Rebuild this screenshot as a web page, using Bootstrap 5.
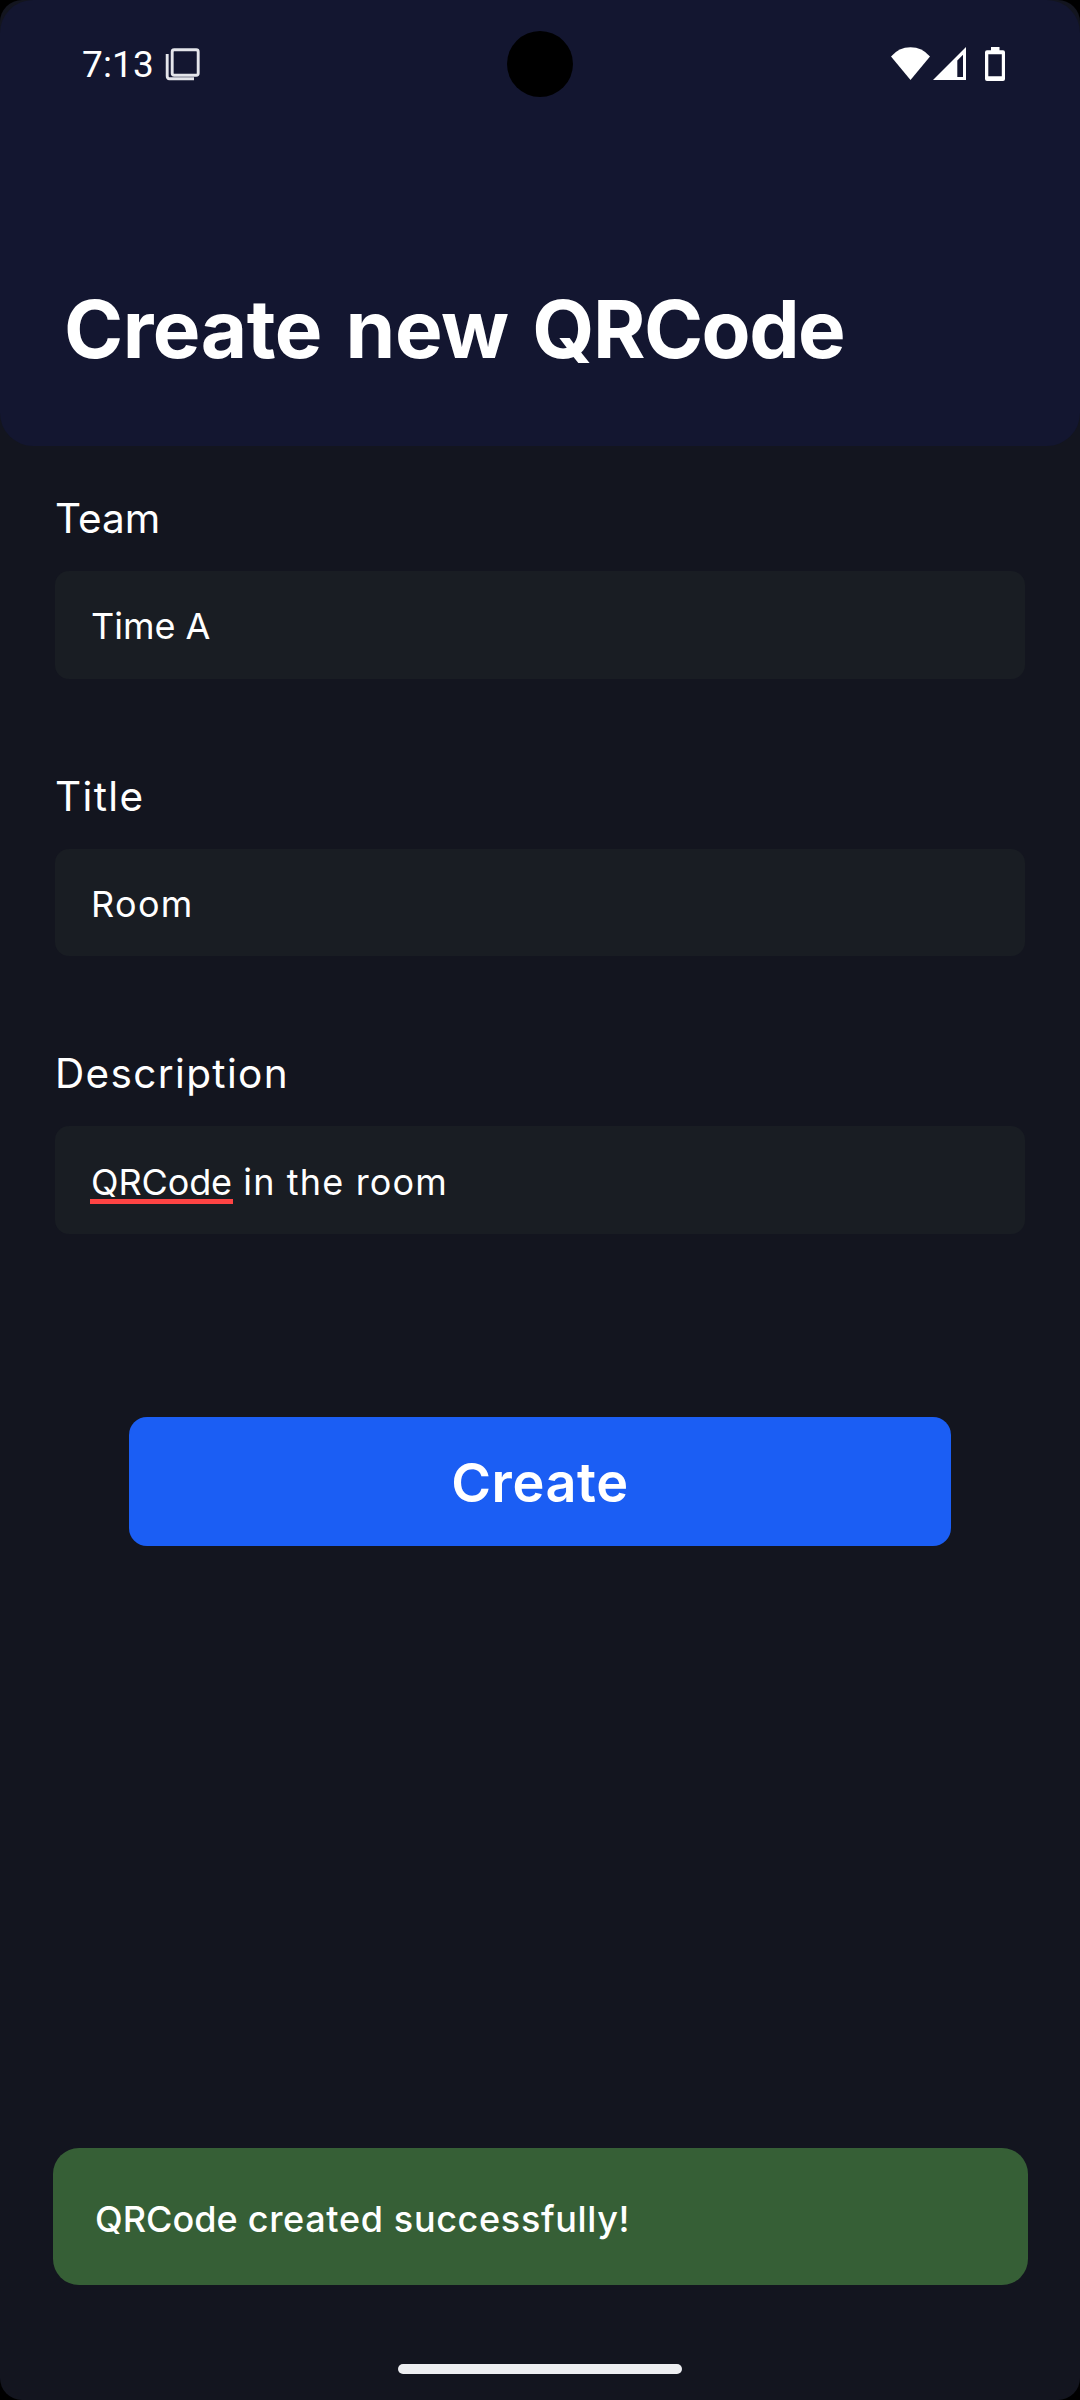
<!DOCTYPE html>
<html lang="en" data-bs-theme="dark">
<head>
<meta charset="utf-8">
<meta name="viewport" content="width=device-width, initial-scale=1">
<title>Create new QRCode</title>
<link href="https://cdn.jsdelivr.net/npm/bootstrap@5.3.0/dist/css/bootstrap.min.css" rel="stylesheet">
<style>
body { background: #000; color: #fff; font-family: Inter, "Noto Sans", sans-serif; }
.screen { height: 2400px; background: #13151f; border-radius: 22px; }
.app-header { height: 446px; background: #131630; border-radius: 33px; }
.status-bar { height: 128px; padding: 0 74px 0 82px; }
.clock { font: 400 37px/1 Roboto, sans-serif; letter-spacing: .15px; margin-right: 11px; }
.camera { width: 66px; height: 66px; background: #000; top: 31px; left: 507px; }
.page-title { font-size: 80px; line-height: 96px; letter-spacing: -.5px; word-spacing: 5.3px; margin: 153px 0 0 64px; }
.ls-tight { letter-spacing: -1.5px; }
.app-form { padding: 45px 55px 0; }
.field { height: 277.7px; }
.field .form-label { font-size: 40.5px; line-height: 56px; margin: 0 0 24px; }
.field .form-control { height: 107.5px; border: 0; border-radius: 14px; background: #191d23; color: #fff; font-size: 36px; line-height: 54px; padding: 28px 36px 0; }
.ls-wide { letter-spacing: 1.35px; }
.field .ls-phrase { letter-spacing: 1.15px; padding-top: 29px; }
.ls-notice { letter-spacing: .65px; }
.misspelled { letter-spacing: -.1px; }
.misspelled::after { content: ""; position: absolute; left: -1px; right: -1px; top: 44px; height: 5px; background: #ff4444; }
.btn-create { height: 129px; margin: 93px 74px 0; border: 0; border-radius: 18px; background: #1b5ef4; color: #fff; font-size: 54px; line-height: 66px; letter-spacing: .6px; font-weight: 600; padding: 2px 0 0; }
.btn-create:hover { background: #1b5ef4; }
.notice { height: 137px; margin: 0 52px 79px 53px; border-radius: 26px; background: #365f36; color: #fff; font-size: 36px; line-height: 54px; font-weight: 550; padding: 5px 42px 0; }
.home-bar { width: 284px; height: 10px; border-radius: 5px; background: #edeef1; margin-bottom: 26px; }
</style>
<script src="https://cdn.jsdelivr.net/npm/bootstrap@5.3.0/dist/js/bootstrap.bundle.min.js"></script>
</head>
<body>
<main class="screen d-flex flex-column overflow-hidden position-relative">
  <header class="app-header">
    <div class="status-bar d-flex align-items-center justify-content-between">
      <div class="d-flex align-items-center">
        <span class="clock">7:13</span>
        <svg width="36" height="36" viewBox="0 0 36 36" fill="none" stroke="#e4e5ea" stroke-width="2.9">
          <rect x="7.2" y="3.7" width="26" height="25.6" rx="2"/>
          <path d="M2.2 8v22q0 2.700 2.200 2.700H29"/>
        </svg>
      </div>
      <svg width="116" height="36" viewBox="0 0 116 36" fill="#fff">
        <path d="M1 10.500Q8.800 1.200 20.500 1.200T40 10.500L20.500 34Z"/>
        <path fill-rule="evenodd" d="M43 34L76 1V34ZM67.300 14.500V31H73V8.800Z"/>
        <path fill-rule="evenodd" d="M101 1h8.500v3.300H113q2 0 2 2V33q0 2-2 2H97q-2 0-2-2V6.300q0-2 2-2h4ZM98.300 8.300V30.300H111.800V8.300Z"/>
      </svg>
    </div>
    <h1 class="page-title fw-bold">Create new <span class="ls-tight">QRCode</span></h1>
  </header>
  <div class="camera position-absolute rounded-circle"></div>

  <form class="app-form d-flex flex-column">
    <div class="field">
      <div class="form-label">Team</div>
      <div class="form-control">Time A</div>
    </div>
    <div class="field">
      <div class="form-label ls-wide">Title</div>
      <div class="form-control ls-wide">Room</div>
    </div>
    <div class="field">
      <div class="form-label ls-wide">Description</div>
      <div class="form-control ls-phrase"><span class="misspelled position-relative d-inline-block">QRCode</span> in the room</div>
    </div>
    <button type="button" class="btn btn-primary btn-create">Create</button>
  </form>

  <div class="notice mt-auto d-flex align-items-center flex-shrink-0" role="alert"><div><span>QRCode</span><span class="ls-notice"> created successfully!</span></div></div>
  <div class="home-bar mx-auto flex-shrink-0"></div>
</main>
</body>
</html>
